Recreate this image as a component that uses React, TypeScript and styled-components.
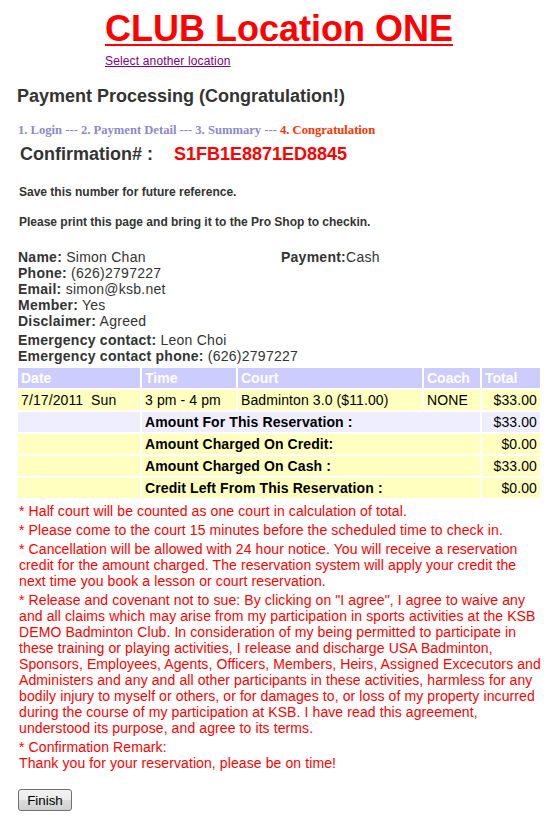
import React from 'react';
import styled, { createGlobalStyle } from 'styled-components';

const GlobalStyle = createGlobalStyle`
    body {
        margin: 0;
        background: #ffffff;
        font-family: "Liberation Sans", Arial, sans-serif;
    }
`

const Page = styled.div`
    padding: 9px 18px 8px 18px;
    display: flex;
    flex-direction: column;
`

const Header = styled.header`
    display: flex;
    justify-content: center;
`

const HeaderInner = styled.div`
    display: flex;
    flex-direction: column;
    align-items: flex-start;
`

const ClubTitle = styled.h1`
    margin: 0;
    font-size: 36px;
    line-height: 40px;
    font-weight: 700;
    color: #ff0000;
    text-decoration: underline;
    text-decoration-thickness: 2px;
    text-underline-offset: 3px;
`

const LocationLink = styled.a`
    margin-top: 5px;
    font-size: 12px;
    line-height: 14px;
    letter-spacing: 0.15px;
    color: #800080;
    text-decoration: underline;
    cursor: pointer;
`

const PageTitle = styled.h2`
    margin: 18px 0 0 -1px;
    font-size: 18px;
    line-height: 21px;
    font-weight: 700;
    color: #333333;
`

const Steps = styled.div`
    margin-top: 16px;
    font-family: "Liberation Serif", "Times New Roman", serif;
    font-size: 12.6px;
    line-height: 15px;
    font-weight: 700;
    color: #8a8acc;
`

const Step = styled.span<{ $current?: boolean }>`
    color: ${({ $current }) => ($current ? '#ff3300' : 'inherit')};
`

const ConfirmRow = styled.div`
    margin-top: 6px;
    margin-left: 2px;
    display: flex;
    gap: 21px;
    font-size: 18px;
    line-height: 21px;
    font-weight: 700;
    color: #333333;
`

const ConfirmNumber = styled.span`
    color: #ff0000;
`

const Note = styled.p<{ $gap: number }>`
    margin: ${({ $gap }) => $gap}px 0 0 1px;
    font-size: 12px;
    line-height: 14px;
    font-weight: 700;
    color: #333333;
`

const InfoGrid = styled.div`
    margin-top: 20px;
    display: grid;
    grid-template-columns: 263px 1fr;
    font-size: 14px;
    line-height: 16px;
    letter-spacing: 0.25px;
    color: #333333;
`

const InfoColumn = styled.div`
    display: flex;
    flex-direction: column;
`

const Emergency = styled.div`
    margin-top: 3px;
    display: flex;
    flex-direction: column;
    font-size: 14px;
    line-height: 16px;
    letter-spacing: 0.25px;
    color: #333333;
`

const Label = styled.b`
    font-weight: 700;
`

const Table = styled.table`
    margin: 2px -2px 0 -2px;
    width: 526px;
    table-layout: fixed;
    border-collapse: separate;
    border-spacing: 2px;
    font-size: 14px;
    line-height: 16px;
    color: #000000;
`

const Th = styled.th`
    padding: 2px 2px 2px 3px;
    height: 20px;
    box-sizing: border-box;
    background: #ccccff;
    color: #ffffff;
    font-weight: 700;
    text-align: left;
    white-space: nowrap;
    overflow: hidden;
`

const Td = styled.td<{ $bg: string; $right?: boolean; $bold?: boolean }>`
    padding: 2px 3px 2px 3px;
    height: 20px;
    box-sizing: border-box;
    background: ${({ $bg }) => $bg};
    text-align: ${({ $right }) => ($right ? 'right' : 'left')};
    font-weight: ${({ $bold }) => ($bold ? 700 : 400)};
    letter-spacing: 0.1px;
    white-space: nowrap;
`

const Notices = styled.div`
    margin: 3px -2px 0 0;
    font-size: 14px;
    line-height: 16px;
    letter-spacing: 0.1px;
    color: #ff0000;
`

const Notice = styled.p`
    margin: 0 0 3px 1px;
`

const FinishButton = styled.button`
    margin: 15px 0 0 0;
    align-self: flex-start;
    width: 54px;
    height: 22px;
    padding: 0;
    font-family: "Liberation Sans", Arial, sans-serif;
    font-size: 13.33px;
    color: #000000;
    border: 1px solid #707070;
    border-radius: 3px;
    background: linear-gradient(#f2f2f2 0%, #ebebeb 50%, #dddddd 51%, #cfcfcf 100%);
    cursor: pointer;
`

const YELLOW = '#ffffc0';
const LAVENDER = '#eeeeff';

const summary = [
    { label: 'Amount For This Reservation :', amount: '$33.00', bg: LAVENDER },
    { label: 'Amount Charged On Credit:', amount: '$0.00', bg: YELLOW },
    { label: 'Amount Charged On Cash :', amount: '$33.00', bg: YELLOW },
    { label: 'Credit Left From This Reservation :', amount: '$0.00', bg: YELLOW },
];

const notices = [
    '* Half court will be counted as one court in calculation of total.',
    '* Please come to the court 15 minutes before the scheduled time to check in.',
    '* Cancellation will be allowed with 24 hour notice. You will receive a reservation credit for the amount charged. The reservation system will apply your credit the next time you book a lesson or court reservation.',
    '* Release and covenant not to sue: By clicking on "I agree", I agree to waive any and all claims which may arise from my participation in sports activities at the KSB DEMO Badminton Club. In consideration of my being permitted to participate in these training or playing activities, I release and discharge USA Badminton, Sponsors, Employees, Agents, Officers, Members, Heirs, Assigned Excecutors and Administers and any and all other participants in these activities, harmless for any bodily injury to myself or others, or for damages to, or loss of my property incurred during the course of my participation at KSB. I have read this agreement, understood its purpose, and agree to its terms.',
];

const App = () => {
    return (
        <>
            <GlobalStyle />
            <Page>
                <Header>
                    <HeaderInner>
                        <ClubTitle>CLUB Location ONE</ClubTitle>
                        <LocationLink>Select another location</LocationLink>
                    </HeaderInner>
                </Header>

                <PageTitle>Payment Processing (Congratulation!)</PageTitle>

                <Steps>
                    <Step>1. Login --- 2. Payment Detail --- 3. Summary --- </Step>
                    <Step $current>4. Congratulation</Step>
                </Steps>

                <ConfirmRow>
                    <span>Confirmation# :</span>
                    <ConfirmNumber>S1FB1E8871ED8845</ConfirmNumber>
                </ConfirmRow>

                <Note $gap={20}>Save this number for future reference.</Note>
                <Note $gap={16}>Please print this page and bring it to the Pro Shop to checkin.</Note>

                <InfoGrid>
                    <InfoColumn>
                        <span><Label>Name:</Label> Simon Chan</span>
                        <span><Label>Phone:</Label> (626)2797227</span>
                        <span><Label>Email:</Label> simon@ksb.net</span>
                        <span><Label>Member:</Label> Yes</span>
                        <span><Label>Disclaimer:</Label> Agreed</span>
                    </InfoColumn>
                    <InfoColumn>
                        <span><Label>Payment:</Label>Cash</span>
                    </InfoColumn>
                </InfoGrid>

                <Emergency>
                    <span><Label>Emergency contact:</Label> Leon Choi</span>
                    <span><Label>Emergency contact phone:</Label> (626)2797227</span>
                </Emergency>

                <Table>
                    <colgroup>
                        <col style={{ width: 122 }} />
                        <col style={{ width: 94 }} />
                        <col style={{ width: 184 }} />
                        <col style={{ width: 56 }} />
                        <col style={{ width: 58 }} />
                    </colgroup>
                    <thead>
                        <tr>
                            <Th>Date</Th>
                            <Th>Time</Th>
                            <Th>Court</Th>
                            <Th>Coach</Th>
                            <Th>Total</Th>
                        </tr>
                    </thead>
                    <tbody>
                        <tr>
                            <Td $bg={YELLOW}>7/17/2011&nbsp; Sun</Td>
                            <Td $bg={YELLOW}>3 pm - 4 pm</Td>
                            <Td $bg={YELLOW}>Badminton 3.0 ($11.00)</Td>
                            <Td $bg={YELLOW}>NONE</Td>
                            <Td $bg={YELLOW} $right>$33.00</Td>
                        </tr>
                        {summary.map((row) => (
                            <tr key={row.label}>
                                <Td $bg={row.bg} />
                                <Td $bg={row.bg} $bold colSpan={3}>{row.label}</Td>
                                <Td $bg={row.bg} $right>{row.amount}</Td>
                            </tr>
                        ))}
                    </tbody>
                </Table>

                <Notices>
                    {notices.map((text) => (
                        <Notice key={text}>{text}</Notice>
                    ))}
                    <Notice>
                        * Confirmation Remark:<br />
                        Thank you for your reservation, please be on time!
                    </Notice>
                </Notices>

                <FinishButton type='button'>Finish</FinishButton>
            </Page>
        </>
    )
}

export default App;
